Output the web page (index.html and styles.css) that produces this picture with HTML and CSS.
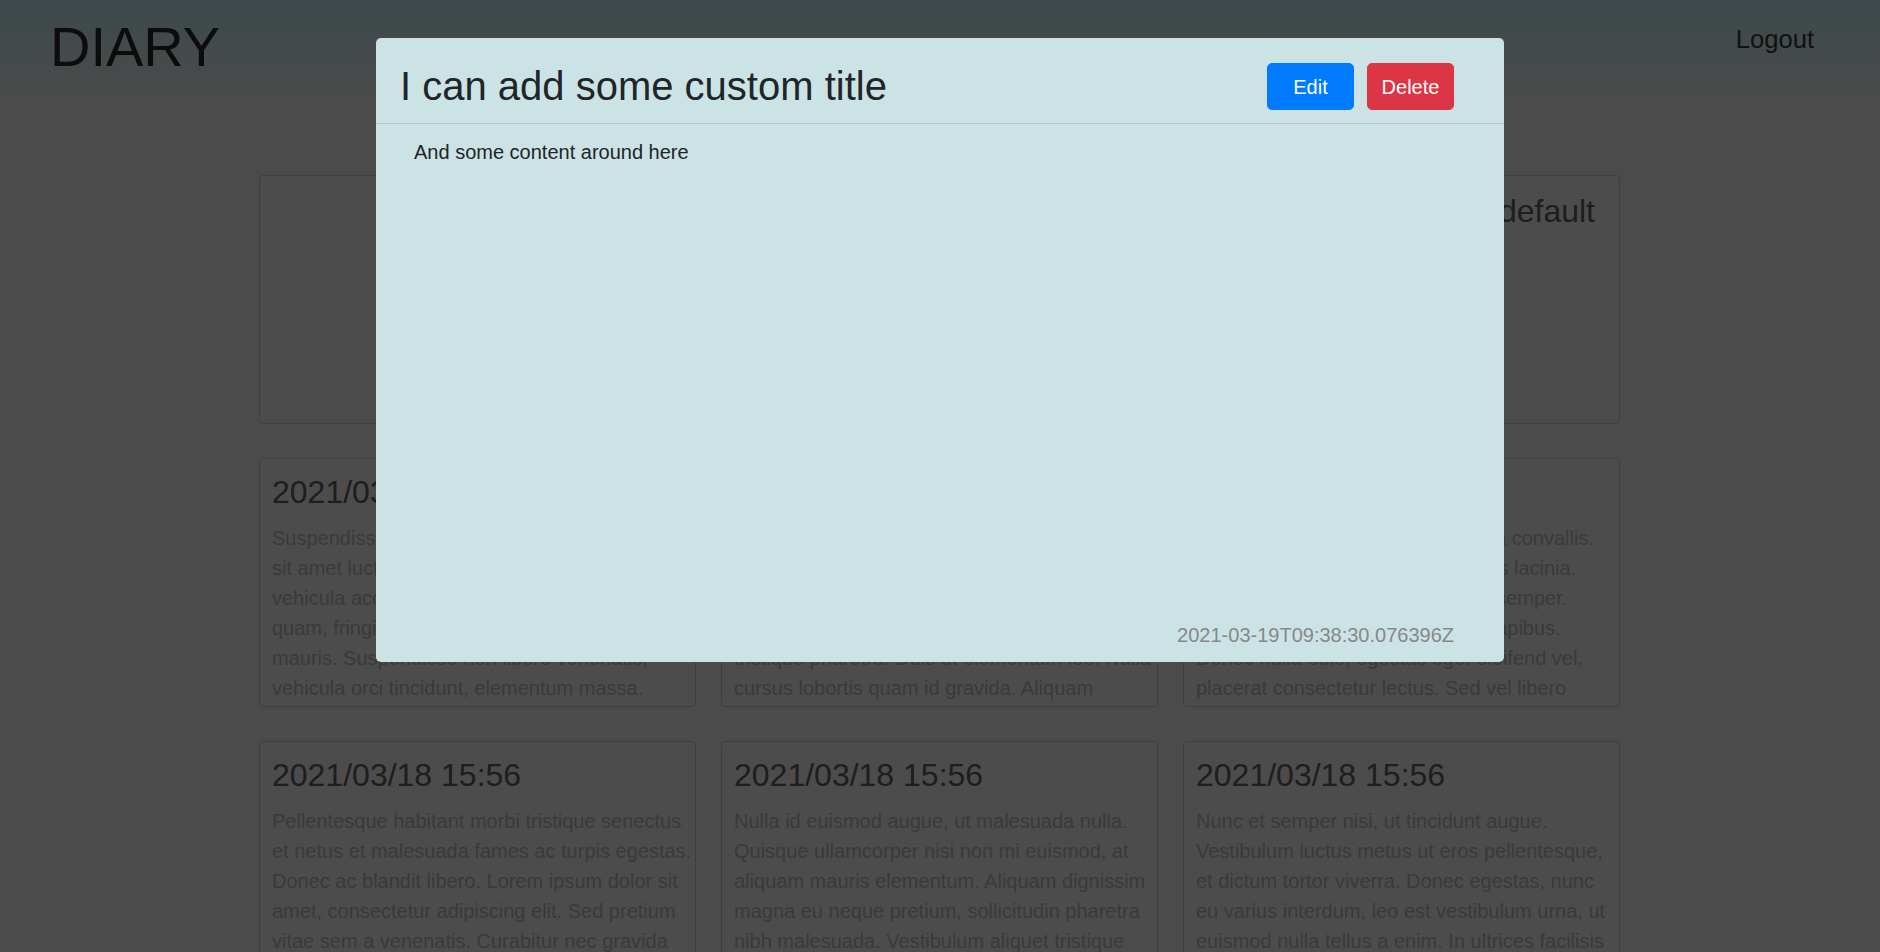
FILE: index.html
```html
<!DOCTYPE html>
<html lang="en">
<head>
<meta charset="utf-8">
<title>Diary</title>
<link rel="stylesheet" href="styles.css">
</head>
<body>
<header class="topbar">
  <div class="brand">DIARY</div>
  <a class="logout" href="#">Logout</a>
</header>

<main class="cards">
  <article class="card card-wide">
    <div class="card-body">
      <h2 class="card-title title-right">Showing all entries by default</h2>
    </div>
  </article>

  <article class="card">
    <div class="card-body">
      <h2 class="card-title">2021/03/18 15:56</h2>
      <p class="card-text">Suspendisse potenti. Vestibulum a ligula et<br>sit amet luctus ipsum. Integer eget ante<br>vehicula accumsan, et tempus erat. Nulla<br>quam, fringilla at diam vitae, ultricies<br>mauris. Suspendisse non libero venenatis,<br>vehicula orci tincidunt, elementum massa.</p>
    </div>
  </article>
  <article class="card">
    <div class="card-body">
      <h2 class="card-title">2021/03/18 15:56</h2>
      <p class="card-text">Morbi in lacus quis arcu luctus ultricies.<br>Etiam vel sapien id lectus pulvinar mollis<br>ac quis magna. Integer commodo sem sed<br>purus posuere, a consequat nunc aliquet<br>tristique pharetra. Duis ut elementum leo. Nulla<br>cursus lobortis quam id gravida. Aliquam<br>erat volutpat.</p>
    </div>
  </article>
  <article class="card">
    <div class="card-body">
      <h2 class="card-title">2021/03/18 15:56</h2>
      <p class="card-text">Aenean vitae mauris quis orci nulla convallis.<br>Praesent nec tortor eget quis purus lacinia.<br>Nam tincidunt lorem ut quis ligula semper.<br>Curabitur et metus vel, eu turpis dapibus.<br>Donec nulla odio, egestas eget eleifend vel,<br>placerat consectetur lectus. Sed vel libero<br>ullamcorper, rutrum velit at, iaculis nisl.</p>
    </div>
  </article>

  <article class="card">
    <div class="card-body">
      <h2 class="card-title">2021/03/18 15:56</h2>
      <p class="card-text">Pellentesque habitant morbi tristique senectus<br>et netus et malesuada fames ac turpis egestas.<br>Donec ac blandit libero. Lorem ipsum dolor sit<br>amet, consectetur adipiscing elit. Sed pretium<br>vitae sem a venenatis. Curabitur nec gravida<br>risus. Aliquam erat volutpat.</p>
    </div>
  </article>
  <article class="card">
    <div class="card-body">
      <h2 class="card-title">2021/03/18 15:56</h2>
      <p class="card-text">Nulla id euismod augue, ut malesuada nulla.<br>Quisque ullamcorper nisi non mi euismod, at<br>aliquam mauris elementum. Aliquam dignissim<br>magna eu neque pretium, sollicitudin pharetra<br>nibh malesuada. Vestibulum aliquet tristique<br>lorem, in sagittis est.</p>
    </div>
  </article>
  <article class="card">
    <div class="card-body">
      <h2 class="card-title">2021/03/18 15:56</h2>
      <p class="card-text">Nunc et semper nisi, ut tincidunt augue.<br>Vestibulum luctus metus ut eros pellentesque,<br>et dictum tortor viverra. Donec egestas, nunc<br>eu varius interdum, leo est vestibulum urna, ut<br>euismod nulla tellus a enim. In ultrices facilisis<br>sapien, vel tempor orci.</p>
    </div>
  </article>
</main>

<div class="backdrop">
  <div class="modal">
    <div class="modal-header">
      <h1 class="modal-title">I can add some custom title</h1>
      <div class="modal-actions">
        <button class="btn btn-primary" type="button">Edit</button>
        <button class="btn btn-danger" type="button">Delete</button>
      </div>
    </div>
    <div class="modal-body">
      <p class="modal-text">And some content around here</p>
      <div class="modal-date">2021-03-19T09:38:30.076396Z</div>
    </div>
  </div>
</div>
</body>
</html>
```

FILE: styles.css
```css
* {
  box-sizing: border-box;
}

html, body {
  margin: 0;
  padding: 0;
}

body {
  font-family: "Liberation Sans", Arial, sans-serif;
  background: #fafafa;
  color: #212529;
  width: 1880px;
  height: 952px;
  overflow: hidden;
}

.topbar {
  height: 100px;
  display: flex;
  justify-content: space-between;
  align-items: flex-start;
  padding: 13px 66px 0 50px;
  background: linear-gradient(to bottom, #cbf7fa 0%, #fafafa 100%);
}

.brand {
  font-size: 56px;
  line-height: 67px;
  color: #2a2a2a;
}

.logout {
  margin-top: 7px;
  font-size: 25.6px;
  line-height: 38px;
  color: #3a3a3a;
  text-decoration: none;
}

.cards {
  margin: 75px 260px 0 259px;
  display: grid;
  grid-template-columns: repeat(3, 1fr);
  grid-auto-rows: 249px;
  column-gap: 25px;
  row-gap: 34px;
}

.card {
  background: #fff;
  border: 1px solid #d2d2d2;
  border-radius: 4px;
  overflow: hidden;
}

.card-wide {
  grid-column: 1 / -1;
}

.card-body {
  padding: 14px 2px 0 12px;
}

.card-title {
  margin: 0 0 12px;
  font-size: 32px;
  line-height: 38.4px;
  font-weight: 400;
  color: #646464;
}

.title-right {
  text-align: right;
  padding-right: 22px;
  padding-top: 2px;
}

.card-text {
  margin: 0;
  font-size: 20px;
  line-height: 30px;
  color: #c2c2c2;
}

.backdrop {
  position: fixed;
  inset: 0;
  background: rgba(0, 0, 0, 0.7);
  display: flex;
  justify-content: center;
  align-items: flex-start;
}

.modal {
  margin-top: 38px;
  width: 1128px;
  height: 624px;
  background: #cbe3e4;
  border-radius: 5px;
  display: flex;
  flex-direction: column;
}

.modal-header {
  display: flex;
  align-items: flex-start;
  padding: 24px 50px 13px 24px;
  border-bottom: 1px solid #b3cbcc;
}

.modal-title {
  flex: 1;
  margin: 0;
  font-size: 40px;
  line-height: 48px;
  font-weight: 400;
  color: #212529;
}

.modal-actions {
  display: flex;
  gap: 13px;
  padding-top: 1px;
}

.btn {
  width: 87px;
  height: 47px;
  padding: 0;
  border: 1px solid transparent;
  border-radius: 5px;
  font-family: "Liberation Sans", Arial, sans-serif;
  font-size: 20px;
  line-height: 30px;
  color: #fff;
  text-align: center;
  cursor: pointer;
}

.btn-primary {
  background: #007bff;
  border-color: #007bff;
}

.btn-danger {
  background: #dc3545;
  border-color: #dc3545;
}

.modal-body {
  flex: 1;
  display: flex;
  flex-direction: column;
  padding: 13px 50px 12px 38px;
}

.modal-text {
  margin: 0;
  font-size: 20px;
  line-height: 30px;
  color: #212529;
}

.modal-date {
  margin-top: auto;
  text-align: right;
  font-size: 20px;
  line-height: 30px;
  color: #888888;
}
```
